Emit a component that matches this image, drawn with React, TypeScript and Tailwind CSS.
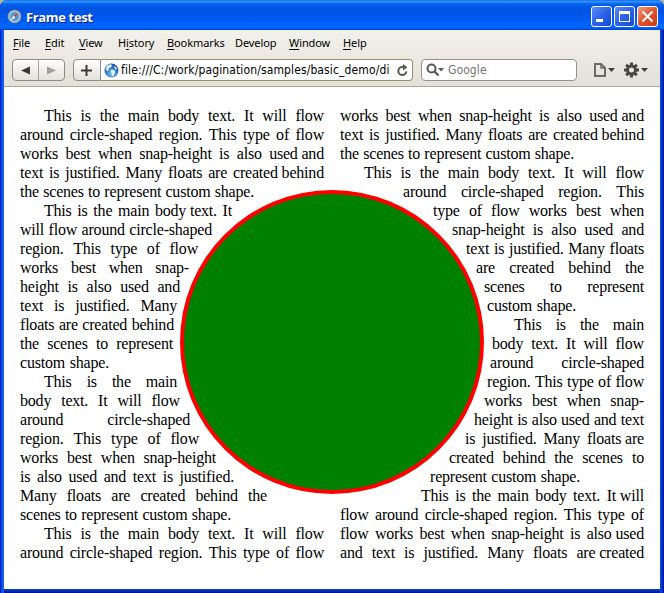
import React from "react";

type Line = [left: number, right: number, text: string];

// "~" keeps two words together with a normal, unstretched space.
const columnOne: Line[] = [
  [44, 324, "This is the main body text. It will flow"],
  [20, 324, "around circle-shaped region. This type of flow"],
  [20, 324, "works best when snap-height is also used~and"],
  [20, 324, "text is justified. Many floats are created~behind"],
  [20, 254, "the scenes to represent custom shape."],
  [44, 232, "This is the main body~text. It"],
  [20, 212, "will flow around circle-shaped"],
  [20, 198, "region. This type of flow"],
  [20, 189, "works best when snap-"],
  [20, 180, "height is also used and"],
  [20, 177, "text is justified. Many"],
  [20, 174, "floats are created behind"],
  [20, 173, "the scenes to represent"],
  [20, 109, "custom shape."],
  [44, 177, "This is the main"],
  [20, 180, "body text. It will flow"],
  [20, 190, "around circle-shaped"],
  [20, 199, "region. This type of flow"],
  [20, 216, "works best when snap-height"],
  [20, 234, "is also used and text is justified."],
  [20, 267, "Many floats are created behind the"],
  [20, 231, "scenes to represent custom shape."],
  [44, 324, "This is the main body text. It will flow"],
  [20, 324, "around circle-shaped region. This type of flow"],
];

const columnTwo: Line[] = [
  [340, 644, "works best when snap-height is also used~and"],
  [340, 644, "text is justified. Many floats are created~behind"],
  [340, 574, "the scenes to represent custom shape."],
  [364, 644, "This is the main body text. It will flow"],
  [403, 644, "around circle-shaped region. This"],
  [433, 644, "type of flow works best when"],
  [452, 644, "snap-height is also used and"],
  [466, 644, "text is justified. Many floats"],
  [476, 644, "are created behind the"],
  [484, 644, "scenes to represent"],
  [487, 576, "custom shape."],
  [514, 644, "This is the main"],
  [492, 644, "body text. It will flow"],
  [490, 644, "around circle-shaped"],
  [487, 644, "region. This type of flow"],
  [484, 644, "works best when snap-"],
  [474, 644, "height is also used and text"],
  [465, 644, "is justified. Many floats~are"],
  [449, 644, "created behind the scenes to"],
  [430, 580, "represent custom shape."],
  [421, 644, "This is the main body text. It~will"],
  [340, 644, "flow around circle-shaped region. This type of"],
  [340, 644, "flow works best when snap-height is also~used"],
  [340, 644, "and text is justified. Many floats are~created"],
];

function Column({ lines, origin }: { lines: Line[]; origin: number }) {
  return (
    <div className="w-[304px] shrink-0">
      {lines.map(([left, right, text], i) => (
        <div
          key={i}
          className="flex h-[19px] justify-between whitespace-nowrap"
          style={{ marginLeft: left - origin, width: right - left }}
        >
          {text.split(" ").map((word, j) => (
            <span key={j}>{word.replace("~", "\u00a0")}</span>
          ))}
        </div>
      ))}
    </div>
  );
}

const menus: { before: string; key: string; after: string; width: string }[] = [
  { before: "", key: "F", after: "ile", width: "w-8" },
  { before: "", key: "E", after: "dit", width: "w-[34px]" },
  { before: "", key: "V", after: "iew", width: "w-[39px]" },
  { before: "H", key: "i", after: "story", width: "w-[49px]" },
  { before: "", key: "B", after: "ookmarks", width: "w-[68px]" },
  { before: "Develop", key: "", after: "", width: "w-[54px]" },
  { before: "", key: "W", after: "indow", width: "w-[54px]" },
  { before: "", key: "H", after: "elp", width: "w-8" },
];

function Compass() {
  return (
    <svg className="mr-1 size-[15px]" viewBox="0 0 15 15">
      <circle cx="7.5" cy="7.5" r="7" fill="#68788b" />
      <circle cx="7.5" cy="7.5" r="6.2" fill="#c4ccd2" />
      <circle cx="7.5" cy="7.5" r="5" fill="#4b9bd4" />
      <circle cx="7.5" cy="7.5" r="4.4" fill="none" stroke="#a9d0e8" strokeWidth=".8" strokeDasharray="1 1.2" />
      <path d="M11.4 3.2 8.5 8.5 6.5 6.5Z" fill="#e2432f" />
      <path d="M3.4 11.6 6.5 6.5 8.5 8.5Z" fill="#f1f1f1" />
    </svg>
  );
}

function Globe() {
  return (
    <svg className="mr-[2px] size-[15px] shrink-0" viewBox="0 0 15 15">
      <defs>
        <radialGradient id="ocean" cx="50%" cy="75%" r="75%">
          <stop offset="0" stopColor="#7cc4f5" />
          <stop offset=".55" stopColor="#2f79c4" />
          <stop offset="1" stopColor="#1b4f97" />
        </radialGradient>
      </defs>
      <circle cx="7.5" cy="7.5" r="7" fill="url(#ocean)" />
      <path d="M2.2 3.4Q4.2 1.2 7 1.3L8.3 2.4 6.9 4.4 5 5.2 4.6 7.4 3.3 8.3 1.5 6.3Z" fill="#cfe5f7" />
      <path d="M7.4 6.6 10.2 7 11.2 9 9.8 12.4 8.3 13.2 7.7 10.5 6.4 8.6ZM10.6 2.6 13.2 5.8 12.4 6.8 10.4 4.9Z" fill="#e4f2fc" />
    </svg>
  );
}

const toolButton = "border border-[#8f8c82] bg-gradient-to-b from-white to-[#e2e0d9]";
const captionButton =
  "flex size-[21px] items-center justify-center rounded-[3px] border border-white bg-gradient-to-br";

export default function App() {
  return (
    <div className="h-[593px] w-[664px] overflow-hidden bg-[#b9b39d]">
      <div className="relative flex h-[593px] w-[664px] flex-col overflow-hidden rounded-t-[7px] bg-[linear-gradient(to_right,#0019cf_0,#0831d9_1px,#166aee_3px,#0855dd_4px,#0855dd_660px,#0441d8_661px,#0030d0_662px,#00138c_664px)] font-['DejaVu_Sans_Condensed','DejaVu_Sans',sans-serif]">
        <header className="flex h-[30px] shrink-0 items-center bg-[linear-gradient(#0058e6_0,#3a93ff_1px,#288eff_2px,#0262ee_4px,#0054e3_8px,#0055e5_14px,#005bf5_20px,#0066ff_25px,#0061fc_28px,#0040c8_30px)] pt-[3px] pl-[7px]">
          <Compass />
          <h1 className="w-[68px] whitespace-nowrap font-['Open_Sans',sans-serif] text-[13px] leading-4 font-bold tracking-[-0.35px] text-white [text-shadow:1px_1px_#0a1883]">
            Frame test
          </h1>
          <div className="ml-auto flex gap-[2px] pr-[6px]">
            <button className={`${captionButton} from-[#5c8bf8] via-[#2c62ea] to-[#1748d0]`}>
              <svg className="size-[19px]" viewBox="0 0 19 19"><path d="M4 12h7v3H4z" fill="#fff" /></svg>
            </button>
            <button className={`${captionButton} from-[#5c8bf8] via-[#2c62ea] to-[#1748d0]`}>
              <svg className="size-[19px]" viewBox="0 0 19 19"><path d="M4 4h11v11H4zM5 7v7h9V7z" fill="#fff" fillRule="evenodd" /></svg>
            </button>
            <button className={`${captionButton} from-[#f09a80] via-[#e2512c] to-[#c83c10]`}>
              <svg className="size-[19px]" viewBox="0 0 19 19"><path d="m4.5 4.5 10 10m0-10-10 10" stroke="#fff" strokeWidth="2" /></svg>
            </button>
          </div>
        </header>

        <div className="ml-1 flex min-h-0 w-[656px] flex-1 flex-col">
          <div className="h-[57px] shrink-0 border-b border-[#aca899] bg-gradient-to-b from-[#f3f1ec] to-[#e3e0d7]">
            <nav className="flex h-[27px] items-center pl-[9px] font-['Noto_Sans',sans-serif] text-[11px] tracking-[-0.1px] text-black">
              {menus.map((m) => (
                <span key={m.before + m.key} className={`${m.width} shrink-0 whitespace-nowrap`}>
                  {m.before}
                  <span className="underline decoration-1 underline-offset-2">{m.key}</span>
                  {m.after}
                </span>
              ))}
            </nav>
            <div className="flex h-[27px] items-center pb-[1px] pl-[8px]">
              <div className={`flex h-[22px] w-[53px] rounded-[4px] ${toolButton}`}>
                <div className="flex w-[26px] items-center justify-center border-r border-[#a5a299]">
                  <svg className="h-[9px] w-[9px]" viewBox="0 0 9 9"><path d="M9 .5v8L0 4.5Z" fill="#3c3a35" /></svg>
                </div>
                <div className="flex flex-1 items-center justify-center">
                  <svg className="h-[9px] w-[9px]" viewBox="0 0 9 9"><path d="M0 .5v8l9-4Z" fill="#a19f99" /></svg>
                </div>
              </div>
              <div className={`ml-2 flex h-[22px] w-[28px] items-center justify-center rounded-l-[4px] pr-px ${toolButton}`}>
                <svg className="size-[11px]" viewBox="0 0 11 11"><path d="M5.5 0v11M0 5.5h11" stroke="#3c3a35" strokeWidth="2" /></svg>
              </div>
              <div className="flex h-[22px] w-[312px] items-center rounded-r-[4px] border border-l-0 border-[#96906f] bg-white pl-[3px]">
                <Globe />
                <span className="w-[270px] shrink-0 text-[12px] leading-4 tracking-[0.12px] whitespace-nowrap text-black">
                  file:///C:/work/pagination/samples/basic_demo/di
                </span>
                <svg className="ml-[5px] size-[13px] shrink-0" viewBox="0 0 13 13">
                  <path d="M10.3 7.3A4 4 0 1 1 6.5 3h2" fill="none" stroke="#5b5955" strokeWidth="2" />
                  <path d="M7 0 11.5 3.2 7 6.5Z" fill="#5b5955" />
                </svg>
              </div>
              <div className="ml-2 flex h-[22px] w-[156px] items-center rounded-[4px] border border-[#94928c] bg-white pl-1">
                <svg className="mr-1 h-[14px] w-[18px]" viewBox="0 0 18 14">
                  <circle cx="5.5" cy="5.5" r="4" fill="none" stroke="#5b5955" strokeWidth="2" />
                  <path d="m8.5 8.5 4 4" stroke="#5b5955" strokeWidth="2.4" />
                  <path d="M12 5h6l-3 3.5Z" fill="#5b5955" />
                </svg>
                <span className="text-[12px] tracking-[0.1px] text-[#747474]">Google</span>
              </div>
              <svg className="ml-[17px] h-[16px] w-[54px]" viewBox="0 0 54 16">
                <path d="M1 2h6l4 4v8H1Z" fill="none" stroke="#6c6a62" strokeWidth="2" />
                <path d="M7 2v4h4" fill="none" stroke="#6c6a62" strokeWidth="1.5" />
                <path d="M14 6h7l-3.5 4ZM47 6h7l-3.5 4Z" fill="#3f3d38" />
                <circle cx="37.5" cy="8" r="4" fill="none" stroke="#494740" strokeWidth="3" />
                <path d="M37.5.5v3M37.5 12.5v3M30 8h3M42 8h3M32.2 2.7l2.1 2.1M40.7 11.2l2.1 2.1M42.8 2.7l-2.1 2.1M34.3 11.2l-2.1 2.1" stroke="#494740" strokeWidth="3" />
              </svg>
            </div>
          </div>
          <main className="flex flex-1 gap-4 overflow-hidden bg-white px-4 pt-[19px] font-['Liberation_Serif',serif] text-[16px] leading-[19px] tracking-[-0.2px] text-black">
            <Column lines={columnOne} origin={20} />
            <Column lines={columnTwo} origin={340} />
          </main>
          <footer className="h-1 shrink-0 bg-gradient-to-b from-[#0842dc] to-[#00138c]" />
        </div>
        <div className="absolute top-[190px] left-[180px] size-[303.5px] rounded-full bg-[#ff0000] p-[3.5px]">
          <div className="size-full rounded-full bg-[#008000]" />
        </div>
      </div>
    </div>
  );
}
